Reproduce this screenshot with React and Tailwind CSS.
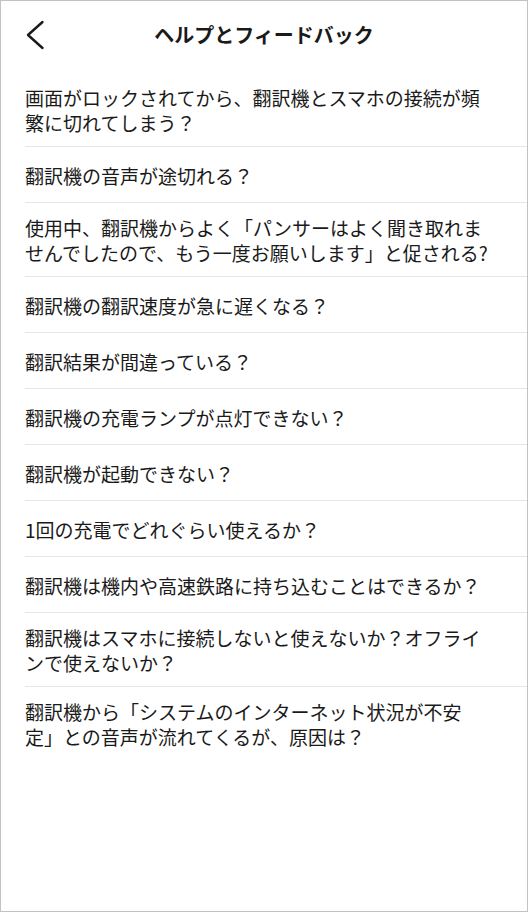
import React from "react";

const items = [
  "画面がロックされてから、翻訳機とスマホの接続が頻繁に切れてしまう？",
  "翻訳機の音声が途切れる？",
  "使用中、翻訳機からよく「パンサーはよく聞き取れませんでしたので、もう一度お願いします」と促される?",
  "翻訳機の翻訳速度が急に遅くなる？",
  "翻訳結果が間違っている？",
  "翻訳機の充電ランプが点灯できない？",
  "翻訳機が起動できない？",
  "1回の充電でどれぐらい使えるか？",
  "翻訳機は機内や高速鉄路に持ち込むことはできるか？",
  "翻訳機はスマホに接続しないと使えないか？オフラインで使えないか？",
  "翻訳機から「システムのインターネット状況が不安定」との音声が流れてくるが、原因は？",
];

export default function App() {
  return (
    <div
      className="w-[528px] h-[912px] bg-white border border-[#c2c2c2] overflow-hidden text-[#1a1a1a]"
      style={{ fontFamily: '"Noto Sans CJK JP", "Noto Sans", sans-serif' }}
    >
      <div className="relative h-[68px] flex items-center justify-center">
        <svg
          className="absolute left-[24px] top-[19px]"
          width="20"
          height="30"
          viewBox="0 0 20 30"
          fill="none"
        >
          <polyline
            points="17.5,2 3,15 17.5,28"
            stroke="#1a1a1a"
            strokeWidth="2.4"
            strokeLinecap="round"
            strokeLinejoin="round"
          />
        </svg>
        <h1 className="text-[20px] font-bold leading-[28px] tracking-normal">
          ヘルプとフィードバック
        </h1>
      </div>
      <ul className="mt-[4px]">
        {items.map((t, i) => (
          <li
            key={i}
            className={
              "ml-[24px] min-h-[56px] pt-[12px] pb-[11px] pr-[36px] flex items-center " +
              (i < items.length - 1 ? "border-b border-[#e6e6e6]" : "")
            }
          >
            <span className="text-[19px] leading-[25px] [text-spacing-trim:space-all]">{t}</span>
          </li>
        ))}
      </ul>
    </div>
  );
}
